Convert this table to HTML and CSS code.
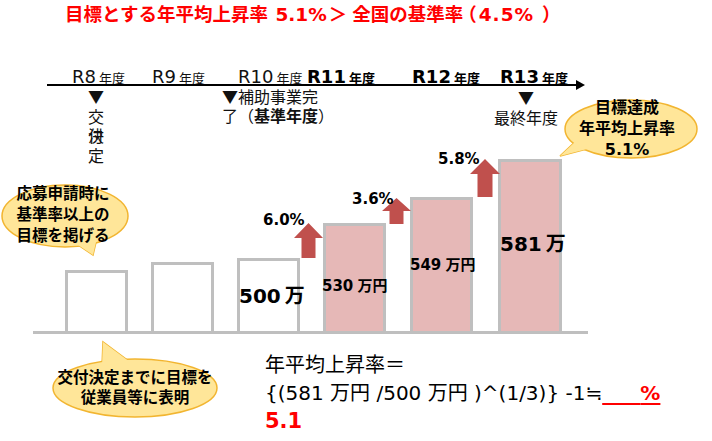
FILE: index.html
```html
<!DOCTYPE html>
<html lang="ja">
<head>
<meta charset="utf-8">
<title>年平均上昇率</title>
<link rel="stylesheet" href="styles.css">
</head>
<body>
<div class="slide">
  <h1 class="title">目標とする年平均上昇率 <span class="n1">5.1%</span><span class="gt">＞</span>全国の基準率<span class="pl">（</span><span class="n2">4.5%</span><span class="pr">）</span></h1>

  <div class="years">
    <div class="yr"><span class="rn">R8</span><span class="nd">年度</span></div>
    <div class="yr"><span class="rn">R9</span><span class="nd">年度</span></div>
    <div class="yr"><span class="rn">R10</span><span class="nd">年度</span></div>
    <div class="yr strong"><span class="rn">R11</span><span class="nd">年度</span></div>
    <div class="yr strong"><span class="rn">R12</span><span class="nd">年度</span></div>
    <div class="yr strong"><span class="rn">R13</span><span class="nd">年度</span></div>
  </div>

  <div class="axis"></div>

  <div class="notes">
    <div class="note-v">▼<br>交<br><span class="ov">決<span class="ov-top">付</span></span><br>定</div>
    <div class="note-m">▼補助事業完<br>了（<b>基準年度</b>）</div>
    <div class="note-f">▼<br>最終年度</div>
  </div>

  <div class="chart">
    <div class="bars">
      <div class="bar b1"></div>
      <div class="bar b2"></div>
      <div class="bar b3"><span class="lbl big l3">500 万</span></div>
      <div class="bar b4 pink"><span class="lbl small l4">530 万円</span></div>
      <div class="bar b5 pink"><span class="lbl small l5">549 万円</span></div>
      <div class="bar b6 pink"><span class="lbl big l6">581 万</span></div>
    </div>
    <div class="baseline"></div>

    <svg class="up up1" width="29" height="35" viewBox="0 0 29 35"><polygon points="14.5,0 29,15 21.5,15 21.5,35 7.5,35 7.5,15 0,15"/></svg>
    <svg class="up up2" width="29" height="26" viewBox="0 0 29 26"><polygon points="14.5,0 29,13 21.5,13 21.5,26 7.5,26 7.5,13 0,13"/></svg>
    <svg class="up up3" width="30" height="38" viewBox="0 0 30 38"><polygon points="15,0 30,15 22.5,15 22.5,38 7.5,38 7.5,15 0,15"/></svg>

    <span class="pct p1">6.0%</span>
    <span class="pct p2">3.6%</span>
    <span class="pct p3">5.8%</span>
  </div>

  <div class="formula">
    <div>年平均上昇率＝</div>
    <div>{(581 万円 /500 万円 )^(1/3)} -1≒<span class="blank">&nbsp;&nbsp;&nbsp;&nbsp;&nbsp;&nbsp;<b>%</b></span></div>
    <div class="answer">5.1</div>
  </div>

  <div class="bubble bub1">
    <svg class="bub-bg" width="132" height="75" viewBox="0 0 132 75">
      <polygon class="tail" points="72,58 93,72 97,55"/>
      <ellipse cx="65" cy="33" rx="63" ry="31"/>
      <polygon class="tail-fill" points="72,58 93,72 97,55"/>
    </svg>
    <div class="bub-text t1">応募申請時に<br>基準率以上の<br>目標を掲げる</div>
  </div>

  <div class="bubble bub2">
    <svg class="bub-bg" width="170" height="80" viewBox="0 0 170 80">
      <polygon class="tail" points="53,2 52,26 80,22"/>
      <ellipse cx="85" cy="48" rx="82" ry="29"/>
      <polygon class="tail-fill" points="53,2 52,26 80,22"/>
    </svg>
    <div class="bub-text t2">交付決定までに目標を<br>従業員等に表明</div>
  </div>

  <div class="bubble bub3">
    <svg class="bub-bg" width="150" height="64" viewBox="0 0 150 64">
      <polygon class="tail" points="4,59 20,44 31,52"/>
      <ellipse cx="75" cy="32" rx="66" ry="29"/>
      <polygon class="tail-fill" points="4,59 20,44 31,52"/>
    </svg>
    <div class="bub-text t3">目標達成<br>年平均上昇率<br>5.1%</div>
  </div>
</div>
</body>
</html>
```

FILE: styles.css
```css
html, body {
  margin: 0;
  padding: 0;
  background: #fff;
}

.slide {
  position: relative;
  width: 712px;
  height: 441px;
  overflow: hidden;
  font-family: "DejaVu Sans", "Noto Sans CJK JP", sans-serif;
  color: #000;
}

.title {
  margin: 0;
  height: 30px;
  padding-left: 65px;
  font-size: 18.5px;
  line-height: 30px;
  font-weight: bold;
  color: #ff0000;
  white-space: nowrap;
}

.n1 {
  margin-left: 1px;
}

.gt {
  margin-left: 2px;
  margin-right: 5px;
}

.pl {
  margin-left: -5px;
}

.n2 {
  margin-left: 2px;
  letter-spacing: 1px;
}

.pr {
  margin-left: 8px;
}

/* timeline labels */
.years {
  margin-top: 36px;
  height: 18px;
  padding-left: 72px;
  display: grid;
  grid-template-columns: 80px 86px 69px 105px 88px auto;
  line-height: 22px;
  white-space: nowrap;
  color: #111;
}

.rn {
  font-size: 18px;
}

.nd {
  font-size: 13px;
  margin-left: 3px;
  font-family: "Noto Sans CJK JP", sans-serif;
}

.strong {
  font-weight: bold;
  color: #000;
}

.axis {
  position: relative;
  margin-left: 47px;
  width: 529px;
  height: 2px;
  background: #000;
}

.axis::after {
  content: "";
  position: absolute;
  left: 100%;
  top: -4px;
  border-left: 9px solid #000;
  border-top: 5px solid transparent;
  border-bottom: 5px solid transparent;
}

/* notes under the axis */
.notes {
  height: 73px;
  padding-left: 88px;
  display: grid;
  grid-template-columns: 134px 271px auto;
  font-family: "Noto Sans CJK JP", sans-serif;
  font-size: 16px;
  color: #111;
}

.note-v {
  width: 16px;
  text-align: center;
  line-height: 19.5px;
  padding-top: 1px;
}

.ov {
  position: relative;
  display: inline-block;
}

.ov-top {
  position: absolute;
  left: 0;
  top: 0;
}

.note-m {
  line-height: 19px;
  padding-top: 1px;
  white-space: nowrap;
}

.note-f {
  width: 66px;
  text-align: center;
  line-height: 20px;
  padding-top: 1px;
  white-space: nowrap;
}

/* chart */
.chart {
  position: relative;
  height: 175px;
}

.bars {
  height: 172px;
  padding-left: 65px;
  display: flex;
  align-items: flex-end;
  gap: 23px;
}

.bar {
  box-sizing: border-box;
  width: 63px;
  border: 3px solid #bfbfbf;
  border-bottom: none;
  background: #fff;
  display: flex;
  flex-direction: column;
}

.pink {
  background: #e6b8b7;
}

.b1 { height: 61px; }
.b2 { height: 69px; }
.b3 { height: 73px; }
.b4 { height: 108px; }
.b5 { height: 134px; margin-left: 1px; }
.b6 { height: 172px; width: 64px; margin-left: 2px; }

.lbl {
  display: block;
  white-space: nowrap;
  font-weight: bold;
}

.big {
  font-size: 20px;
  line-height: 24px;
  word-spacing: -3px;
}

.small {
  font-size: 15px;
  line-height: 20px;
  word-spacing: -1px;
}

.l3 { margin-top: 23px; margin-left: -1px; }
.l4 { margin-top: 50px; margin-left: -4px; }
.l5 { margin-top: 55px; margin-left: -3px; }
.l6 { margin-top: 70px; margin-left: -1px; }

.baseline {
  margin-left: 33px;
  width: 555px;
  height: 3px;
  background: #bfbfbf;
}

.up {
  position: absolute;
  fill: #c0504d;
}

.up1 { left: 294px; top: 64px; }
.up2 { left: 382px; top: 39px; }
.up3 { left: 470px; top: 0; }

.pct {
  position: absolute;
  font-size: 15px;
  line-height: 16px;
  font-weight: bold;
  white-space: nowrap;
}

.p1 { left: 263px; top: 53px; }
.p2 { left: 352px; top: 32px; }
.p3 { left: 438px; top: -8px; }

/* formula */
.formula {
  margin-top: 17px;
  margin-left: 265px;
  font-size: 20px;
  line-height: 28px;
  white-space: nowrap;
}

.blank {
  color: #ff0000;
  text-decoration: underline;
  text-decoration-color: #ff0000;
  text-decoration-thickness: 2px;
  text-underline-offset: 3px;
}

.answer {
  color: #ff0000;
  font-weight: bold;
  font-size: 21px;
}

/* callout bubbles */
.bubble {
  position: absolute;
}

.bub-bg {
  position: absolute;
  left: 0;
  top: 0;
}

.bub-bg ellipse,
.bub-bg .tail {
  fill: #ffe699;
  stroke: #f2b530;
  stroke-width: 1.5;
}

.bub-bg .tail-fill {
  fill: #ffe699;
  stroke: none;
}

.bub-text {
  position: relative;
  text-align: center;
  font-weight: bold;
  white-space: nowrap;
}

.bub1 { left: 0; top: 183px; width: 132px; height: 75px; }
.bub2 { left: 50px; top: 340px; width: 170px; height: 80px; }
.bub3 { left: 556px; top: 97px; width: 150px; height: 64px; }

.t1 {
  font-size: 15.5px;
  line-height: 21px;
  padding-top: 1px;
  padding-right: 6px;
}

.t2 {
  font-size: 15.5px;
  line-height: 19.5px;
  padding-top: 29px;
}

.t3 {
  font-size: 16px;
  line-height: 21px;
  padding-right: 8px;
}
```
